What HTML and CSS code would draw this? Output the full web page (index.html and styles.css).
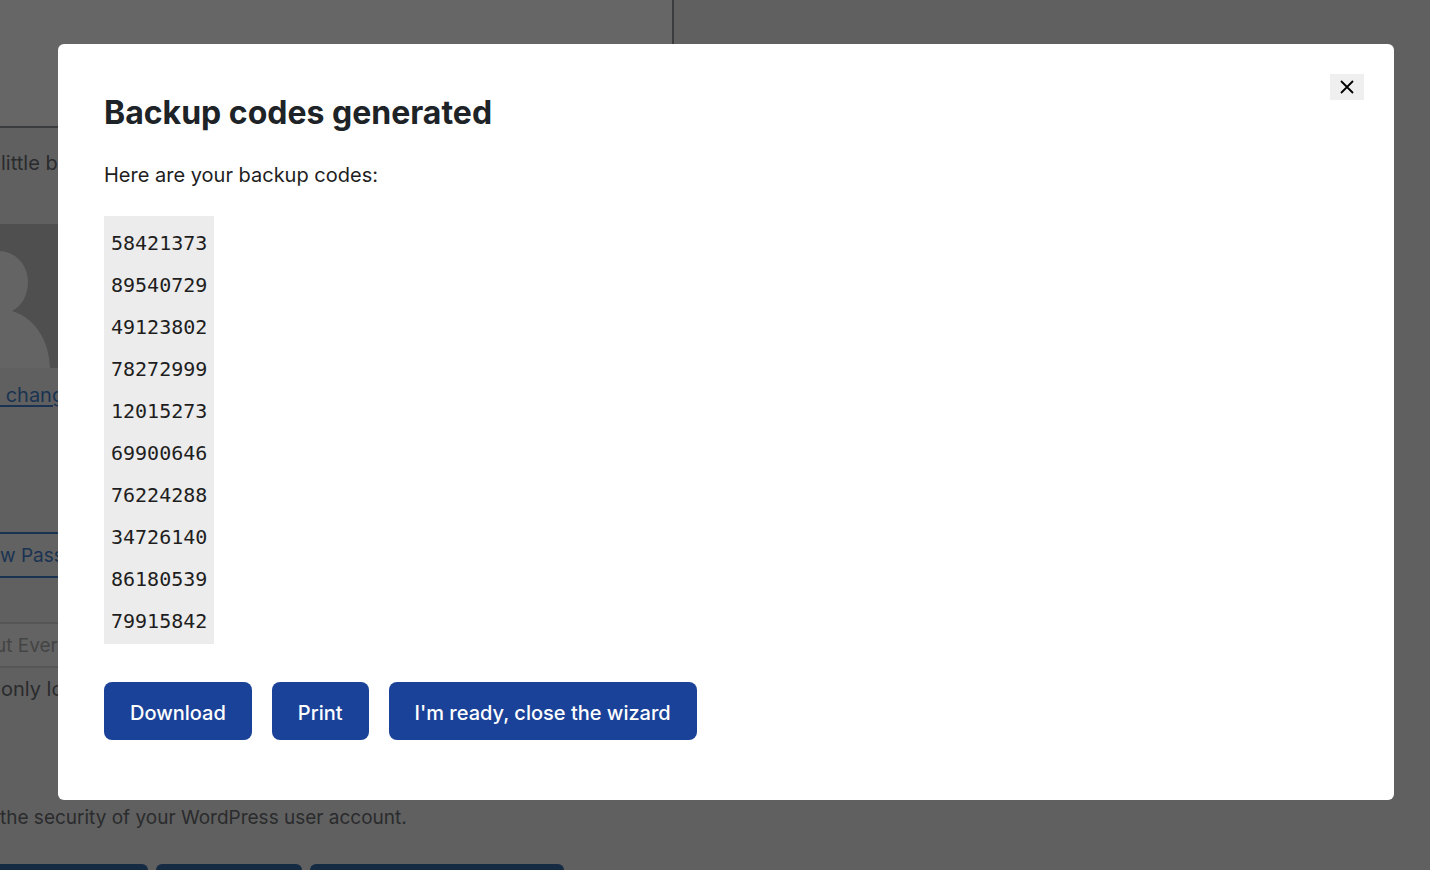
FILE: index.html
```html
<!DOCTYPE html>
<html lang="en">
<head>
<meta charset="utf-8">
<title>Backup codes generated</title>
<link rel="stylesheet" href="styles.css">
</head>
<body>
<main class="profile">
  <textarea class="bio" aria-label="Biographical info"></textarea>
  <p class="hint">little b</p>
  <svg class="avatar" viewBox="0 0 58 144" aria-hidden="true">
    <rect width="58" height="144" fill="#4f4f4f"/>
    <path d="M0 27C16 28 28 41 28 58C28 71 22 82 12 87C35 94 49 116 50 144H0Z" fill="#646464"/>
  </svg>
  <p class="change"><a href="#">&nbsp;chang</a></p>
  <button class="password" type="button">w Pass</button>
  <button class="sessions" type="button" disabled>ut Ever</button>
  <p class="note">only lo</p>
  <p class="security">the security of your WordPress user account.</p>
  <div class="actions">
    <span class="action action-first"></span>
    <span class="action action-second"></span>
    <span class="action action-third"></span>
  </div>
</main>
<div class="overlay">
  <section class="modal" role="dialog" aria-modal="true" aria-labelledby="title">
    <button class="close" type="button" aria-label="Close">
      <svg width="14" height="14" viewBox="0 0 14 14" aria-hidden="true"><path d="M1 1L13 13M13 1L1 13" stroke="#000" stroke-width="1.8" fill="none"/></svg>
    </button>
    <h1 class="title" id="title">Backup codes generated</h1>
    <p class="intro">Here are your backup codes:</p>
    <ul class="codes">
      <li>58421373</li>
      <li>89540729</li>
      <li>49123802</li>
      <li>78272999</li>
      <li>12015273</li>
      <li>69900646</li>
      <li>76224288</li>
      <li>34726140</li>
      <li>86180539</li>
      <li>79915842</li>
    </ul>
    <div class="buttons">
      <button class="button" type="button">Download</button>
      <button class="button" type="button">Print</button>
      <button class="button" type="button">I'm ready, close the wizard</button>
    </div>
  </section>
</div>
</body>
</html>
```

FILE: styles.css
```css
* { box-sizing: border-box; }
body {
  margin: 0;
  height: 100vh;
  overflow: hidden;
  background: #606060;
  color: #2a2b2d;
  font-family: Inter, "Liberation Sans", sans-serif;
}
p { margin: 0; }
button { font-family: inherit; cursor: pointer; }

.profile {
  display: flex;
  flex-direction: column;
  align-items: flex-start;
  height: 100vh;
  overflow: hidden;
}
.profile > * { flex-shrink: 0; }
.bio {
  width: 674px;
  height: 128px;
  border: solid #3b3c3d;
  border-width: 0 2px 2px 0;
  background: #666;
  resize: none;
}
.hint {
  margin: 20px 0 0 1px;
  font-size: 20px;
  line-height: 30px;
}
.avatar {
  width: 58px;
  height: 144px;
  margin-top: 46px;
}
.change {
  margin-top: 12px;
  font-size: 20px;
  line-height: 30px;
}
.change a {
  color: #1a3352;
  text-underline-offset: 3px;
  text-decoration-thickness: 2px;
}
.password {
  width: 120px;
  height: 46px;
  margin-top: 122px;
  padding: 0;
  border: solid #1a3352;
  border-width: 2px 0;
  background: #626262;
  color: #1a3352;
  font-size: 19px;
  text-align: left;
}
.sessions {
  width: 120px;
  height: 46px;
  margin: 44px 0 0 -5px;
  padding: 0;
  border: solid #565656;
  border-width: 2px 0;
  background: #636363;
  color: #434545;
  font-size: 19px;
  text-align: left;
}
.note {
  margin: 6px 0 0 1px;
  font-size: 20px;
  line-height: 30px;
}
.security {
  margin-top: 99px;
  font-size: 19px;
  line-height: 30px;
}
.actions {
  display: flex;
  gap: 8px;
  margin-top: 31px;
}
.action {
  height: 60px;
  border-radius: 6px;
  background: #152a43;
}
.action-first { width: 148px; border-top-left-radius: 0; }
.action-second { width: 146px; }
.action-third { width: 254px; }

.overlay {
  position: fixed;
  inset: 0;
  padding: 44px 36px 70px 58px;
}
.modal {
  position: relative;
  min-height: 100%;
  padding: 44px 46px 60px;
  border-radius: 6px;
  background: #fff;
  color: #1e1e1e;
}
.close {
  position: absolute;
  top: 30px;
  right: 30px;
  display: grid;
  place-items: center;
  width: 34px;
  height: 26px;
  padding: 0;
  border: 0;
  background: #efefef;
}
.title {
  margin: 0;
  color: #1d2327;
  font-size: 32px;
  font-weight: 700;
  line-height: 50px;
}
.intro {
  margin-top: 22px;
  font-size: 20px;
  line-height: 30px;
}
.codes {
  width: fit-content;
  margin: 26px 0 38px;
  padding: 6px 7px 2px;
  background: #ececec;
  font-family: "DejaVu Sans Mono", monospace;
  font-size: 20px;
  line-height: 42px;
  list-style: none;
}
.buttons {
  display: flex;
  gap: 20px;
}
.button {
  padding: 16px 26px 12px;
  border: 0;
  border-radius: 8px;
  background: #1a4298;
  color: #fff;
  font-size: 20px;
  font-weight: 500;
  line-height: 30px;
}
```
